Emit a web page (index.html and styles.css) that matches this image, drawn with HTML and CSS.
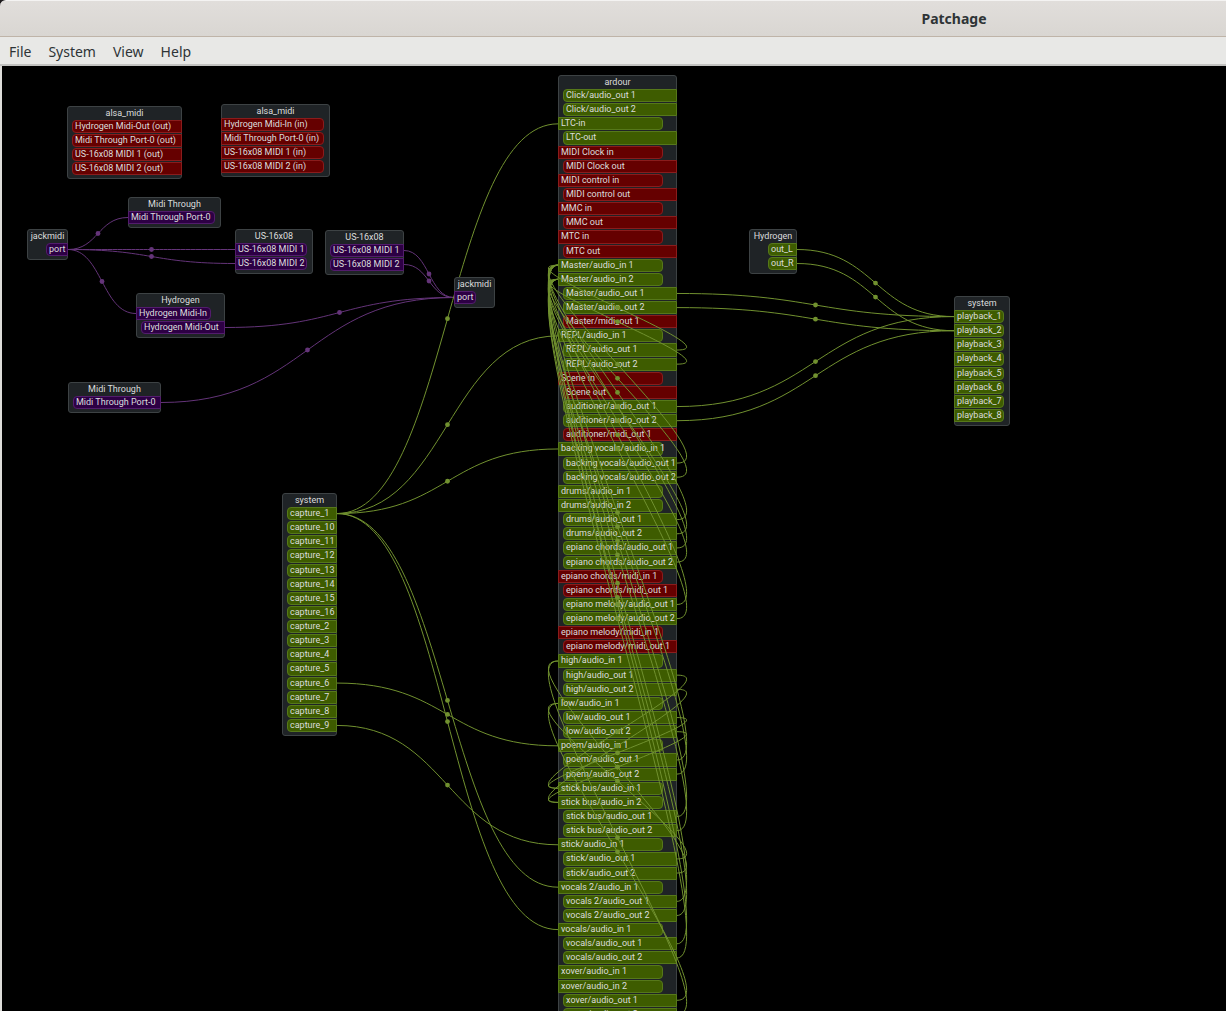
FILE: index.html
```
<!DOCTYPE html>
<html lang="en">
<head>
<meta charset="utf-8">
<title>Patchage</title>
<link rel="stylesheet" href="styles.css">
</head>
<body>
<header class="titlebar"><h1>Patchage</h1></header>
<nav class="menubar">
  <button type="button">File</button>
  <button type="button">System</button>
  <button type="button">View</button>
  <button type="button">Help</button>
</nav>
<main class="canvas" id="canvas">
  <section class="module alsa-out" id="alsa-out">
    <h2>alsa_midi</h2>
    <ul>
      <li class="alsa out">Hydrogen Midi-Out (out)</li>
      <li class="alsa out">Midi Through Port-0 (out)</li>
      <li class="alsa out">US-16x08 MIDI 1 (out)</li>
      <li class="alsa out">US-16x08 MIDI 2 (out)</li>
    </ul>
  </section>
  <section class="module alsa-in" id="alsa-in">
    <h2>alsa_midi</h2>
    <ul>
      <li class="alsa in">Hydrogen Midi-In (in)</li>
      <li class="alsa in">Midi Through Port-0 (in)</li>
      <li class="alsa in">US-16x08 MIDI 1 (in)</li>
      <li class="alsa in">US-16x08 MIDI 2 (in)</li>
    </ul>
  </section>
  <section class="module through-in" id="through-in">
    <h2>Midi Through</h2>
    <ul><li class="midi in">Midi Through Port-0</li></ul>
  </section>
  <section class="module jackmidi-out" id="jackmidi-out">
    <h2>jackmidi</h2>
    <ul><li class="midi out">port</li></ul>
  </section>
  <section class="module us-in" id="us-in">
    <h2>US-16x08</h2>
    <ul>
      <li class="midi in">US-16x08 MIDI 1</li>
      <li class="midi in">US-16x08 MIDI 2</li>
    </ul>
  </section>
  <section class="module us-out" id="us-out">
    <h2>US-16x08</h2>
    <ul>
      <li class="midi out">US-16x08 MIDI 1</li>
      <li class="midi out">US-16x08 MIDI 2</li>
    </ul>
  </section>
  <section class="module hydrogen-midi" id="hydrogen-midi">
    <h2>Hydrogen</h2>
    <ul>
      <li class="midi in">Hydrogen Midi-In</li>
      <li class="midi out">Hydrogen Midi-Out</li>
    </ul>
  </section>
  <section class="module through-out" id="through-out">
    <h2>Midi Through</h2>
    <ul><li class="midi out">Midi Through Port-0</li></ul>
  </section>
  <section class="module capture" id="capture">
    <h2>system</h2>
    <ul>
      <li class="audio out">capture_1</li>
      <li class="audio out">capture_10</li>
      <li class="audio out">capture_11</li>
      <li class="audio out">capture_12</li>
      <li class="audio out">capture_13</li>
      <li class="audio out">capture_14</li>
      <li class="audio out">capture_15</li>
      <li class="audio out">capture_16</li>
      <li class="audio out">capture_2</li>
      <li class="audio out">capture_3</li>
      <li class="audio out">capture_4</li>
      <li class="audio out">capture_5</li>
      <li class="audio out">capture_6</li>
      <li class="audio out">capture_7</li>
      <li class="audio out">capture_8</li>
      <li class="audio out">capture_9</li>
    </ul>
  </section>
  <section class="module ardour" id="ardour">
    <h2>ardour</h2>
    <ul>
      <li class="audio out">Click/audio_out 1</li>
      <li class="audio out">Click/audio_out 2</li>
      <li class="audio in">LTC-in</li>
      <li class="audio out">LTC-out</li>
      <li class="alsa in">MIDI Clock in</li>
      <li class="alsa out">MIDI Clock out</li>
      <li class="alsa in">MIDI control in</li>
      <li class="alsa out">MIDI control out</li>
      <li class="alsa in">MMC in</li>
      <li class="alsa out">MMC out</li>
      <li class="alsa in">MTC in</li>
      <li class="alsa out">MTC out</li>
      <li class="audio in">Master/audio_in 1</li>
      <li class="audio in">Master/audio_in 2</li>
      <li class="audio out">Master/audio_out 1</li>
      <li class="audio out">Master/audio_out 2</li>
      <li class="alsa out">Master/midi_out 1</li>
      <li class="audio in">REPL/audio_in 1</li>
      <li class="audio out">REPL/audio_out 1</li>
      <li class="audio out">REPL/audio_out 2</li>
      <li class="alsa in">Scene in</li>
      <li class="alsa out">Scene out</li>
      <li class="audio out">auditioner/audio_out 1</li>
      <li class="audio out">auditioner/audio_out 2</li>
      <li class="alsa out">auditioner/midi_out 1</li>
      <li class="audio in">backing vocals/audio_in 1</li>
      <li class="audio out">backing vocals/audio_out 1</li>
      <li class="audio out">backing vocals/audio_out 2</li>
      <li class="audio in">drums/audio_in 1</li>
      <li class="audio in">drums/audio_in 2</li>
      <li class="audio out">drums/audio_out 1</li>
      <li class="audio out">drums/audio_out 2</li>
      <li class="audio out">epiano chords/audio_out 1</li>
      <li class="audio out">epiano chords/audio_out 2</li>
      <li class="alsa in">epiano chords/midi_in 1</li>
      <li class="alsa out">epiano chords/midi_out 1</li>
      <li class="audio out">epiano melody/audio_out 1</li>
      <li class="audio out">epiano melody/audio_out 2</li>
      <li class="alsa in">epiano melody/midi_in 1</li>
      <li class="alsa out">epiano melody/midi_out 1</li>
      <li class="audio in">high/audio_in 1</li>
      <li class="audio out">high/audio_out 1</li>
      <li class="audio out">high/audio_out 2</li>
      <li class="audio in">low/audio_in 1</li>
      <li class="audio out">low/audio_out 1</li>
      <li class="audio out">low/audio_out 2</li>
      <li class="audio in">poem/audio_in 1</li>
      <li class="audio out">poem/audio_out 1</li>
      <li class="audio out">poem/audio_out 2</li>
      <li class="audio in">stick bus/audio_in 1</li>
      <li class="audio in">stick bus/audio_in 2</li>
      <li class="audio out">stick bus/audio_out 1</li>
      <li class="audio out">stick bus/audio_out 2</li>
      <li class="audio in">stick/audio_in 1</li>
      <li class="audio out">stick/audio_out 1</li>
      <li class="audio out">stick/audio_out 2</li>
      <li class="audio in">vocals 2/audio_in 1</li>
      <li class="audio out">vocals 2/audio_out 1</li>
      <li class="audio out">vocals 2/audio_out 2</li>
      <li class="audio in">vocals/audio_in 1</li>
      <li class="audio out">vocals/audio_out 1</li>
      <li class="audio out">vocals/audio_out 2</li>
      <li class="audio in">xover/audio_in 1</li>
      <li class="audio in">xover/audio_in 2</li>
      <li class="audio out">xover/audio_out 1</li>
      <li class="audio out">xover/audio_out 2</li>
    </ul>
  </section>
  <section class="module hydrogen-audio" id="hydrogen-audio">
    <h2>Hydrogen</h2>
    <ul>
      <li class="audio out">out_L</li>
      <li class="audio out">out_R</li>
    </ul>
  </section>
  <section class="module playback" id="playback">
    <h2>system</h2>
    <ul>
      <li class="audio in">playback_1</li>
      <li class="audio in">playback_2</li>
      <li class="audio in">playback_3</li>
      <li class="audio in">playback_4</li>
      <li class="audio in">playback_5</li>
      <li class="audio in">playback_6</li>
      <li class="audio in">playback_7</li>
      <li class="audio in">playback_8</li>
    </ul>
  </section>
  <svg class="cables" id="cables" aria-hidden="true"></svg>
  <section class="module jackmidi-in" id="jackmidi-in">
    <h2>jackmidi</h2>
    <ul><li class="midi in">port</li></ul>
  </section>
</main>
<script src="cables.js"></script>
</body>
</html>
```
FILE: styles.css
```
* {
  box-sizing: border-box;
}

body {
  margin: 0;
  height: 100vh;
  display: flex;
  flex-direction: column;
  overflow: hidden;
  background: #1d1a1c;
  color: #2e3436;
  font-family: "Noto Sans", "Open Sans", sans-serif;
}

.titlebar {
  flex: none;
  height: 37px;
  padding-left: 682px;
  display: flex;
  align-items: center;
  justify-content: center;
  border-top: 1px solid #f4f3f2;
  border-bottom: 1px solid #bfb4a8;
  border-top-left-radius: 6px;
  background: linear-gradient(#e1dedb, #d9d6d2);
}

.titlebar h1 {
  margin: 0;
  font-size: 14px;
  line-height: 20px;
  font-weight: 700;
}

.menubar {
  flex: none;
  height: 29px;
  padding: 1px 1px 0;
  display: flex;
  gap: 1px;
  background: #e8e8e6;
  border-bottom: 2px solid #c2c2c0;
}

.menubar button {
  padding: 0 8px;
  border: 0;
  background: none;
  color: inherit;
  font: inherit;
  font-size: 14px;
  line-height: 28px;
}

.canvas {
  flex: 1;
  min-height: 0;
  position: relative;
  overflow: hidden;
  border-left: 2px solid #deddda;
  background: #000;
}

.module {
  --in-gap: 6px;
  --out-gap: 5px;
  position: absolute;
  padding-bottom: 2px;
  border: 1px solid #3d4244;
  border-radius: 3px;
  background: #1f2326;
  color: #dcdddd;
  font-family: Roboto, "Noto Sans", sans-serif;
  font-size: 9px;
  line-height: 12px;
  white-space: nowrap;
}

.module h2 {
  margin: 0 0 1px;
  font: inherit;
  text-align: center;
}

.module ul {
  margin: 0 -1px;
  padding: 0;
  display: grid;
  grid-template-columns: minmax(0, 1fr);
  grid-auto-rows: 1fr;
  list-style: none;
}

.module li {
  min-height: 13px;
  margin-bottom: 1px;
  padding-left: 2px;
  border-width: 1px;
  border-style: solid;
  line-height: 11px;
}

.in {
  margin-right: var(--in-gap);
  border-radius: 0 4px 4px 0;
}

.out {
  margin-left: var(--out-gap);
  border-radius: 4px 0 0 4px;
}

.audio {
  background: #3e5c00;
  border-color: #56781a;
}

.alsa {
  background: #650000;
  border-color: #8a1c1c;
}

.midi {
  background: #2d0044;
  border-color: #521c6c;
}

.alsa-out { left: 65px; top: 40px; width: 115px; }
.alsa-in { left: 219px; top: 38px; width: 109px; }
.through-in { left: 126px; top: 131px; width: 93px; }
.jackmidi-out { left: 25px; top: 163px; width: 41px; --out-gap: 19px; }
.us-in { left: 233px; top: 163px; width: 78px; }
.us-out { left: 323px; top: 164px; width: 79px; }
.hydrogen-midi { left: 134px; top: 227px; width: 89px; --in-gap: 14px; }
.jackmidi-in { left: 452px; top: 211px; width: 41px; --in-gap: 19px; }
.through-out { left: 66px; top: 316px; width: 93px; }
.capture { left: 280px; top: 427px; width: 55px; }
.ardour { left: 556px; top: 9px; width: 119px; --in-gap: 14px; }
.hydrogen-audio { left: 747px; top: 163px; width: 48px; --out-gap: 19px; }
.playback { left: 952px; top: 230px; width: 56px; }

.capture ul { height: 226px; }
.ardour ul { height: 933px; }
.playback ul { height: 113px; }

.cables {
  position: absolute;
  left: 0;
  top: 0;
  width: 100%;
  height: 100%;
  pointer-events: none;
}

.cable {
  fill: none;
  stroke-width: 1;
}

.cable-audio { stroke: #71912f; }
.cable-midi { stroke: #643479; }
.dot-audio { fill: #71912f; }
.dot-midi { fill: #643479; }
```
FILE: cables.js
```
const connections = [
  ["midi", "jackmidi-out", "port", "through-in", "Midi Through Port-0"],
  ["midi", "jackmidi-out", "port", "us-in", "US-16x08 MIDI 1"],
  ["midi", "jackmidi-out", "port", "us-in", "US-16x08 MIDI 2"],
  ["midi", "jackmidi-out", "port", "hydrogen-midi", "Hydrogen Midi-In"],
  ["midi", "us-out", "US-16x08 MIDI 1", "jackmidi-in", "port"],
  ["midi", "us-out", "US-16x08 MIDI 2", "jackmidi-in", "port"],
  ["midi", "hydrogen-midi", "Hydrogen Midi-Out", "jackmidi-in", "port"],
  ["midi", "through-out", "Midi Through Port-0", "jackmidi-in", "port"],
  ["audio", "capture", "capture_1", "ardour", "LTC-in"],
  ["audio", "capture", "capture_1", "ardour", "REPL/audio_in 1"],
  ["audio", "capture", "capture_1", "ardour", "backing vocals/audio_in 1"],
  ["audio", "capture", "capture_1", "ardour", "vocals 2/audio_in 1"],
  ["audio", "capture", "capture_1", "ardour", "vocals/audio_in 1"],
  ["audio", "capture", "capture_6", "ardour", "poem/audio_in 1"],
  ["audio", "capture", "capture_9", "ardour", "stick/audio_in 1"],
  ["audio", "hydrogen-audio", "out_L", "playback", "playback_1"],
  ["audio", "hydrogen-audio", "out_R", "playback", "playback_2"],
  ["audio", "ardour", "stick/audio_out 1", "ardour", "low/audio_in 1"],
  ["audio", "ardour", "stick/audio_out 2", "ardour", "high/audio_in 1"],
  ["audio", "ardour", "xover/audio_out 1", "ardour", "low/audio_in 1"],
  ["audio", "ardour", "xover/audio_out 2", "ardour", "high/audio_in 1"]
];

for (const n of [1, 2]) {
  for (const strip of ["Master", "auditioner"]) {
    connections.push(["audio", "ardour", `${strip}/audio_out ${n}`, "playback", `playback_${n}`]);
  }
  for (const strip of ["REPL", "backing vocals", "drums", "epiano chords", "epiano melody",
    "poem", "stick bus", "vocals 2", "vocals"]) {
    connections.push(["audio", "ardour", `${strip}/audio_out ${n}`, "ardour", `Master/audio_in ${n}`]);
  }
  for (const strip of ["high", "low"]) {
    connections.push(["audio", "ardour", `${strip}/audio_out ${n}`, "ardour", `stick bus/audio_in ${n}`]);
  }
}

const svg = document.getElementById("cables");

function findPort(moduleId, name) {
  const ports = document.querySelectorAll(`#${moduleId} li`);
  return [...ports].find((port) => port.textContent === name).getBoundingClientRect();
}

function add(tag, attributes) {
  const node = document.createElementNS("http://www.w3.org/2000/svg", tag);
  for (const [key, value] of Object.entries(attributes)) node.setAttribute(key, value);
  svg.append(node);
}

const origin = svg.getBoundingClientRect();

for (const [kind, fromModule, fromPort, toModule, toPort] of connections) {
  const from = findPort(fromModule, fromPort);
  const to = findPort(toModule, toPort);
  const x1 = from.right - origin.left;
  const y1 = from.top + from.height / 2 - origin.top;
  const x2 = to.left - origin.left;
  const y2 = to.top + to.height / 2 - origin.top;
  const reach = Math.abs(x2 - x1) / 4;
  const mx = (x1 + x2) / 2;
  const my = (y1 + y2) / 2;
  const a = x1 + reach;
  const b = x2 - reach;
  add("path", {
    class: `cable cable-${kind}`,
    d: `M${x1} ${y1}C${a} ${y1} ${(a + mx) / 2} ${(y1 + my) / 2} ${mx} ${my}` +
       `C${(b + mx) / 2} ${(y2 + my) / 2} ${b} ${y2} ${x2} ${y2}`
  });
  add("circle", { class: `dot-${kind}`, cx: mx, cy: my, r: 2.4 });
}
```
